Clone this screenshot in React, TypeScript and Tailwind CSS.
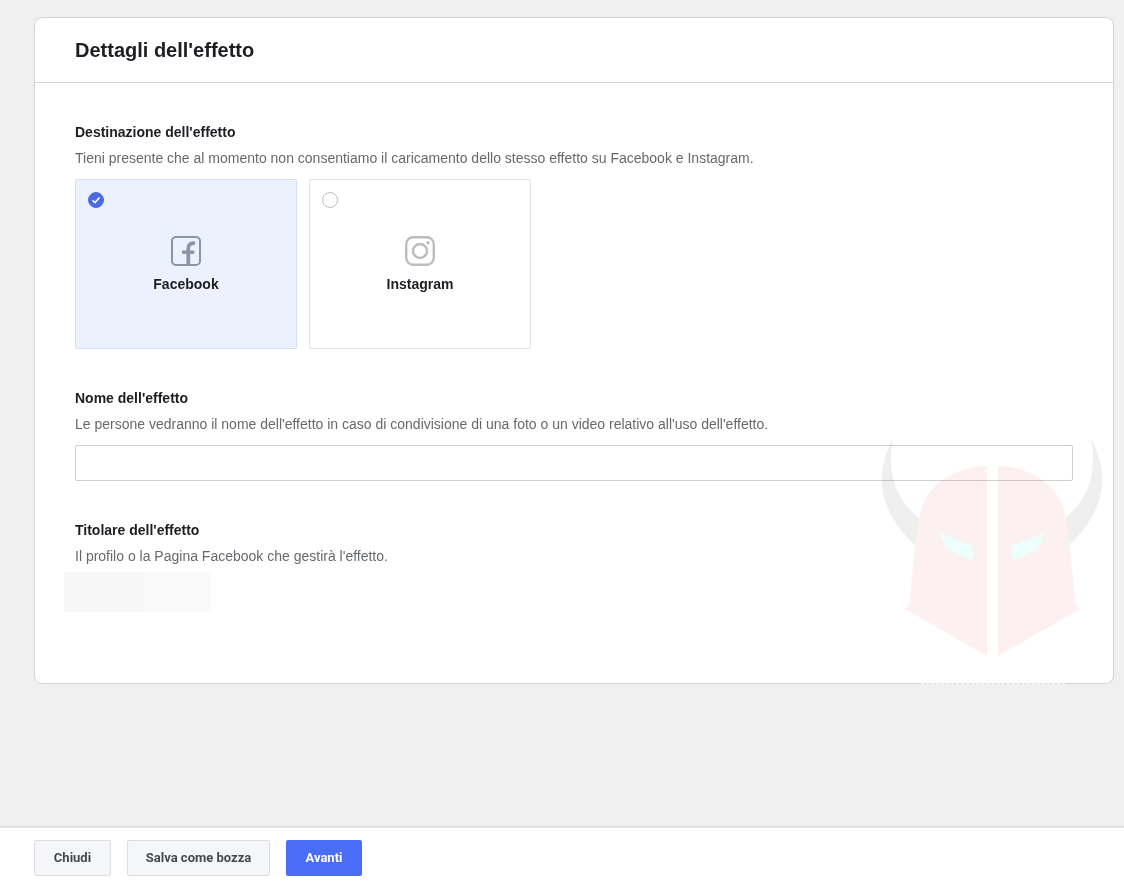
import { useState } from 'react';
import type { ReactNode } from 'react';

type Destination = 'facebook' | 'instagram';

function FacebookIcon() {
  return (
    <svg viewBox="0 0 30 30" className="w-[30px] h-[30px] text-[#8d95a5]" fill="none" stroke="currentColor">
      <rect x="1" y="1" width="28" height="28" rx="4" strokeWidth="2" />
      <path d="M17.3 29V12.5C17.3 8.5 19.5 6.8 24 7.2" strokeWidth="3.8" />
      <path d="M11 16.2H23.3" strokeWidth="3.4" />
    </svg>
  );
}

function InstagramIcon() {
  return (
    <svg viewBox="0 0 30 30" className="w-[30px] h-[30px] text-[#bdbdbd]" fill="none" stroke="currentColor">
      <rect x="1.2" y="1.2" width="27.6" height="27.6" rx="7" strokeWidth="2.4" />
      <circle cx="15" cy="15" r="7" strokeWidth="2.4" />
      <circle cx="23" cy="6.8" r="1.7" fill="currentColor" stroke="none" />
    </svg>
  );
}

function HelmetWatermark() {
  return (
    <svg
      viewBox="0 0 224 220"
      aria-hidden="true"
      className="absolute right-[9px] bottom-[25px] w-[224px] h-[220px] pointer-events-none mix-blend-multiply"
    >
      {/* Horns */}
      <path d="M13 1C-5 34-4 72 36 108L40 81C14 60 7 34 13 1Z" fill="#efefef" />
      <path d="M211 1C229 34 228 72 188 108L184 81C210 60 217 34 211 1Z" fill="#efefef" />
      {/* Mask halves */}
      <path d="M107 28C83 28 56 40 44 63C38 78 36 100 32 138L30 165L25 171L107 218Z" fill="#fdf0f1" />
      <path d="M118 28C142 28 169 40 181 63C187 78 189 100 193 138L195 165L200 171L118 218Z" fill="#fdf0f1" />
      <path d="M107 28H118V218H107Z" fill="#fffffb" />
    </svg>
  );
}

function HelmetEyes() {
  return (
    <svg
      viewBox="0 0 224 220"
      aria-hidden="true"
      className="absolute right-[9px] bottom-[25px] w-[224px] h-[220px] pointer-events-none"
    >
      <path d="M60 95L93 108L93 121L85 120L66 110Z" fill="#ecfffd" />
      <path d="M164 95L131 108L132 121L140 120L159 110Z" fill="#ecfffd" />
    </svg>
  );
}

interface DestinationCardProps {
  value: Destination;
  label: string;
  icon: ReactNode;
  selected: boolean;
  onSelect: (value: Destination) => void;
}

function DestinationCard({ value, label, icon, selected, onSelect }: DestinationCardProps) {
  return (
    <label
      className={`w-[222px] h-[170px] flex flex-col items-center p-3 border rounded-xs cursor-pointer ${
        selected ? 'bg-[#ebf2fe] border-[#d9dff0]' : 'bg-white border-[#e4e4e6]'
      }`}
    >
      <span className="grid self-start w-4 h-4">
        <input
          type="radio"
          name="destination"
          value={value}
          checked={selected}
          onChange={() => onSelect(value)}
          className="col-start-1 row-start-1 appearance-none w-4 h-4 rounded-full border border-[#bfbfbf] bg-white checked:border-[#4a6be3] checked:bg-[#4a6be3]"
        />
        {selected && (
          <svg viewBox="0 0 16 16" className="col-start-1 row-start-1 w-4 h-4 pointer-events-none" fill="none" stroke="#fff" strokeWidth="1.5">
            <path d="M4.5 8.3L7 10.6L11.5 5.6" />
          </svg>
        )}
      </span>
      <span className="mt-7">{icon}</span>
      <span className="mt-2 text-sm font-bold text-[#1c1e21]">{label}</span>
    </label>
  );
}

export default function App() {
  const [destination, setDestination] = useState<Destination>('facebook');
  const [name, setName] = useState('');

  const heading = 'block text-sm font-bold text-[#1c1e21]';
  const hint = 'mt-1.5 text-sm text-[#66696c]';
  const greyButton = 'h-9 border border-[#dddddf] bg-[#f5f6f7] text-[#444950] rounded-xs cursor-pointer';

  return (
    <div className="min-h-screen flex flex-col bg-[#f0f0f0] font-['Liberation_Sans',Arial,sans-serif]">
      <main className="flex-1 pt-[17px] pl-[34px] pr-[10px] pb-10">
        <form id="effect" className="relative bg-white border border-[#d4d4d4] rounded-lg" onSubmit={(e) => e.preventDefault()}>
          <header className="h-[65px] px-10 flex items-center border-b border-[#d4d4d4]">
            <h1 className="text-xl font-bold text-[#1c1e21]">Dettagli dell'effetto</h1>
          </header>

          <div className="px-10 pt-[39px] pb-[71px] flex flex-col gap-[39px]">
            {/* Destination */}
            <fieldset>
              <legend className={heading}>Destinazione dell'effetto</legend>
              <p className={hint}>
                Tieni presente che al momento non consentiamo il caricamento dello stesso effetto su Facebook e Instagram.
              </p>
              <div className="mt-[11px] flex flex-wrap gap-3">
                <DestinationCard
                  value="facebook"
                  label="Facebook"
                  icon={<FacebookIcon />}
                  selected={destination === 'facebook'}
                  onSelect={setDestination}
                />
                <DestinationCard
                  value="instagram"
                  label="Instagram"
                  icon={<InstagramIcon />}
                  selected={destination === 'instagram'}
                  onSelect={setDestination}
                />
              </div>
            </fieldset>

            {/* Name */}
            <div>
              <label htmlFor="effect-name" className={heading}>Nome dell'effetto</label>
              <p className={hint}>
                Le persone vedranno il nome dell'effetto in caso di condivisione di una foto o un video relativo all'uso dell'effetto.
              </p>
              <input
                id="effect-name"
                type="text"
                value={name}
                onChange={(e) => setName(e.target.value)}
                className="block mt-[11px] w-full h-9 px-3 text-sm border border-[#cfcfcf] rounded-xs bg-white focus:outline-none focus:border-[#4a6cf7]"
              />
            </div>

            {/* Owner */}
            <section>
              <h2 className={heading}>Titolare dell'effetto</h2>
              <p className={hint}>Il profilo o la Pagina Facebook che gestirà l'effetto.</p>
              <div className="mt-1.5 -ml-[11px] h-10 flex">
                <div className="w-20 bg-[#f7f7f7]" />
                <div className="w-[67px] bg-[#fafafa]" />
              </div>
            </section>
          </div>

          <HelmetWatermark />
          <HelmetEyes />
          <div className="absolute right-12 -bottom-px w-36 border-b border-dashed border-[#f4f4f4] pointer-events-none" />
        </form>
      </main>

      <footer className="h-[58px] pl-[34px] flex items-center gap-4 bg-white border-t-2 border-[#e2e2e2] pt-1 font-[Roboto,sans-serif] text-[13px] font-bold">
        <button type="button" className={`w-[77px] ${greyButton}`}>Chiudi</button>
        <button type="button" className={`w-[143px] ${greyButton}`}>Salva come bozza</button>
        <button type="submit" form="effect" className="w-[76px] h-9 bg-[#4a6cf7] text-white rounded-xs cursor-pointer">Avanti</button>
      </footer>
    </div>
  );
}
